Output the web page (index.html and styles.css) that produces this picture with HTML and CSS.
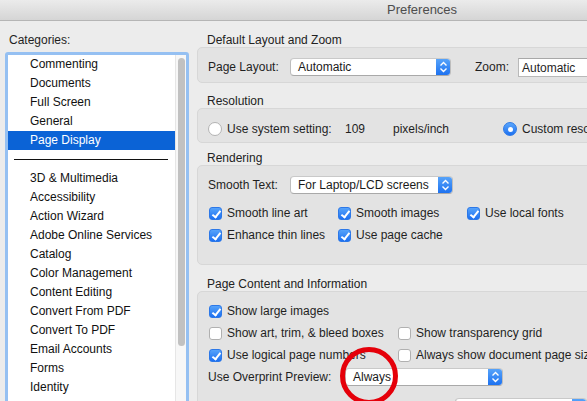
FILE: index.html
```html
<!DOCTYPE html>
<html>
<head>
<meta charset="utf-8">
<title>Preferences</title>
<link rel="stylesheet" href="styles.css">
</head>
<body>
<div class="window">
  <div class="titlebar"><span class="title">Preferences</span></div>
  <div class="content">
    <aside class="sidebar">
      <div class="cat-label">Categories:</div>
      <div class="listbox">
        <div class="list">
          <ul class="items">
            <li>Commenting</li>
            <li>Documents</li>
            <li>Full Screen</li>
            <li>General</li>
            <li class="selected">Page Display</li>
            <li class="sep"><span></span></li>
            <li>3D &amp; Multimedia</li>
            <li>Accessibility</li>
            <li>Action Wizard</li>
            <li>Adobe Online Services</li>
            <li>Catalog</li>
            <li>Color Management</li>
            <li>Content Editing</li>
            <li>Convert From PDF</li>
            <li>Convert To PDF</li>
            <li>Email Accounts</li>
            <li>Forms</li>
            <li>Identity</li>
            <li>Internet</li>
          </ul>
          <div class="scrollbar"><div class="thumb"></div></div>
        </div>
      </div>
    </aside>

    <main class="panel">
      <section class="group g1">
        <div class="group-title">Default Layout and Zoom</div>
        <div class="box box1">
          <div class="row">
            <span class="lbl w82">Page Layout:</span>
            <div class="popup w161"><span class="ptext">Automatic</span><span class="stepper"><svg width="9" height="12" viewBox="0 0 9 12"><path d="M1.5 4.5 L4.5 1.5 L7.5 4.5 M1.5 7.5 L4.5 10.5 L7.5 7.5" fill="none" stroke="#fff" stroke-width="1.4"/></svg></span></div>
            <span class="lbl zoom-lbl">Zoom:</span>
            <div class="combo"><span>Automatic</span></div>
          </div>
        </div>
      </section>

      <section class="group g2">
        <div class="group-title">Resolution</div>
        <div class="box box2">
          <div class="row">
            <span class="radio"></span>
            <span class="lbl res-a">Use system setting:</span>
            <span class="lbl res-b">109</span>
            <span class="lbl res-c">pixels/inch</span>
            <span class="radio on"></span>
            <span class="lbl">Custom resolution:</span>
          </div>
        </div>
      </section>

      <section class="group g3">
        <div class="group-title">Rendering</div>
        <div class="box box3">
          <div class="row">
            <span class="lbl w82">Smooth Text:</span>
            <div class="popup w163"><span class="ptext">For Laptop/LCD screens</span><span class="stepper"><svg width="9" height="12" viewBox="0 0 9 12"><path d="M1.5 4.5 L4.5 1.5 L7.5 4.5 M1.5 7.5 L4.5 10.5 L7.5 7.5" fill="none" stroke="#fff" stroke-width="1.4"/></svg></span></div>
          </div>
          <div class="checks three">
            <label class="check"><span class="cb on"></span>Smooth line art</label>
            <label class="check"><span class="cb on"></span>Smooth images</label>
            <label class="check"><span class="cb on"></span>Use local fonts</label>
            <label class="check"><span class="cb on"></span>Enhance thin lines</label>
            <label class="check"><span class="cb on"></span>Use page cache</label>
          </div>
        </div>
      </section>

      <section class="group g4">
        <div class="group-title">Page Content and Information</div>
        <div class="box box4">
          <div class="checks two">
            <label class="check"><span class="cb on"></span>Show large images</label>
            <span></span>
            <label class="check"><span class="cb"></span>Show art, trim, &amp; bleed boxes</label>
            <label class="check"><span class="cb"></span>Show transparency grid</label>
            <label class="check"><span class="cb on"></span>Use logical page numbers</label>
            <label class="check"><span class="cb"></span>Always show document page size</label>
          </div>
          <div class="row overprint">
            <span class="lbl op-lbl">Use Overprint Preview:</span>
            <div class="popup w158"><span class="ptext">Always</span><span class="stepper"><svg width="9" height="12" viewBox="0 0 9 12"><path d="M1.5 4.5 L4.5 1.5 L7.5 4.5 M1.5 7.5 L4.5 10.5 L7.5 7.5" fill="none" stroke="#fff" stroke-width="1.4"/></svg></span></div>
          </div>
          <div class="row last">
            <div class="popup w132"><span class="ptext">&nbsp;</span><span class="stepper"></span></div>
          </div>
        </div>
      </section>
    </main>
  </div>
  <div class="annot"></div>
</div>
</body>
</html>
```

FILE: styles.css
```css
* { box-sizing: border-box; }
html, body { margin: 0; padding: 0; }
body {
  width: 587px;
  height: 401px;
  overflow: hidden;
  background: #ececec;
  font-family: "Liberation Sans", Arial, sans-serif;
  font-size: 12px;
  color: #1f1f1f;
}
.window {
  position: relative;
  width: 587px;
  height: 401px;
  overflow: hidden;
}
.titlebar {
  height: 21px;
  background: linear-gradient(#ebebeb, #d5d5d5);
  border-bottom: 1px solid #b5b5b5;
  display: flex;
  align-items: center;
  padding-left: 387px;
}
.title {
  font-size: 13px;
  color: #4d4d4d;
  white-space: nowrap;
  line-height: 20px;
}
.content {
  display: flex;
  align-items: flex-start;
}
.sidebar {
  width: 197px;
  flex: none;
  padding-left: 5px;
}
.cat-label {
  padding-left: 4px;
  margin-top: 12px;
  line-height: 14px;
  height: 19px;
  color: #1f1f1f;
}
.listbox {
  width: 184px;
  height: 400px;
  border: 3px solid #95c0f2;
  border-radius: 3px;
  background: #fff;
  overflow: hidden;
}
.list {
  display: flex;
  height: 100%;
}
.items {
  list-style: none;
  margin: 0;
  padding: 0;
  width: 167px;
  flex: none;
}
.items li {
  height: 19px;
  line-height: 19px;
  padding-left: 22px;
  color: #111;
  white-space: nowrap;
}
.items li.selected {
  background: #0b63d6;
  color: #fff;
}
.items li.sep {
  padding-left: 6px;
  display: flex;
  align-items: center;
}
.items li.sep span {
  display: block;
  width: 154px;
  height: 1px;
  background: #111;
}
.scrollbar {
  flex: 1;
  background: #f7f7f7;
  border-left: 1px solid #e6e6e6;
  padding: 3px 2px 0 2px;
}
.thumb {
  width: 7px;
  height: 288px;
  border-radius: 4px;
  background: #c1c1c1;
}
.panel {
  flex: 1;
  min-width: 0;
  white-space: nowrap;
}
.group-title {
  line-height: 14px;
  height: 14px;
  padding-left: 10px;
  color: #222;
}
.g1 { margin-top: 12px; }
.g2 { margin-top: 11px; }
.g3 { margin-top: 8px; }
.g4 { margin-top: 12px; }
.box {
  width: 420px;
  background: #e3e3e3;
  border: 1px solid #d7d7d7;
  border-radius: 5px;
  padding-left: 10px;
}
.box1 { height: 36px; padding-top: 10px; }
.box2 { height: 35px; padding-top: 11px; }
.box3 { height: 100px; padding-top: 10px; }
.box4 { height: 140px; padding-top: 10px; }
.row {
  display: flex;
  align-items: center;
  height: 18px;
}
.lbl { color: #1f1f1f; }
.w82 { width: 82px; flex: none; }
.zoom-lbl { margin-left: 24px; width: 43px; }
.popup {
  display: flex;
  height: 18px;
  background: #fff;
  border: 1px solid #bdbdbd;
  border-top-color: #c9c9c9;
  border-bottom-color: #a9a9a9;
  border-radius: 4px;
  flex: none;
  overflow: hidden;
}
.popup .ptext {
  flex: 1;
  padding-left: 7px;
  line-height: 17px;
  color: #1a1a1a;
}
.stepper {
  width: 15px;
  flex: none;
  background: linear-gradient(#5aa6fa, #1a6ff0);
  display: flex;
  align-items: center;
  justify-content: center;
  margin: -1px -1px -1px 0;
  border-radius: 0 4px 4px 0;
}
.w161 { width: 161px; }
.w163 { width: 163px; }
.w158 { width: 158px; }
.w132 { width: 132px; }
.combo {
  width: 90px;
  height: 19px;
  background: #fff;
  border: 1px solid #b9b9b9;
  border-top-color: #a8a8a8;
  padding-left: 3px;
  line-height: 18px;
  flex: none;
}
.radio {
  width: 14px;
  height: 14px;
  border-radius: 50%;
  background: #fff;
  border: 1px solid #b3b3b3;
  flex: none;
  margin-right: 5px;
  display: flex;
  align-items: center;
  justify-content: center;
}
.radio.on {
  background: linear-gradient(#5ba6fb, #1d71f1);
  border-color: #2f7ae6;
}
.radio.on::after {
  content: "";
  width: 5px;
  height: 5px;
  border-radius: 50%;
  background: #fff;
}
.res-a { width: 118px; flex: none; }
.res-b { width: 48px; flex: none; }
.res-c { width: 110px; flex: none; }
.checks {
  display: grid;
  row-gap: 4px;
}
.checks.three {
  grid-template-columns: 129px 129px 129px;
  margin-top: 10px;
}
.checks.two {
  grid-template-columns: 189px 200px;
}
.check {
  display: flex;
  align-items: center;
  height: 18px;
  padding-left: 1px;
  color: #1f1f1f;
}
.cb {
  width: 13px;
  height: 13px;
  border-radius: 3px;
  background: #fff;
  border: 1px solid #b0b0b0;
  margin-right: 5px;
  flex: none;
  position: relative;
}
.cb.on {
  background: linear-gradient(#56a3fa, #1c70f1);
  border-color: #2c78e8;
}
.cb.on::after {
  content: "";
  position: absolute;
  left: 3.5px;
  top: 1px;
  width: 3px;
  height: 7px;
  border: solid #fff;
  border-width: 0 2px 2px 0;
  transform: rotate(38deg);
}
.overprint { margin-top: 4px; }
.op-lbl { width: 137px; flex: none; }
.last { margin-top: 12px; padding-left: 247px; }
.annot {
  position: absolute;
  left: 340px;
  top: 347px;
  width: 58px;
  height: 58px;
  border: 5px solid #e5000a;
  border-radius: 50%;
}
```
